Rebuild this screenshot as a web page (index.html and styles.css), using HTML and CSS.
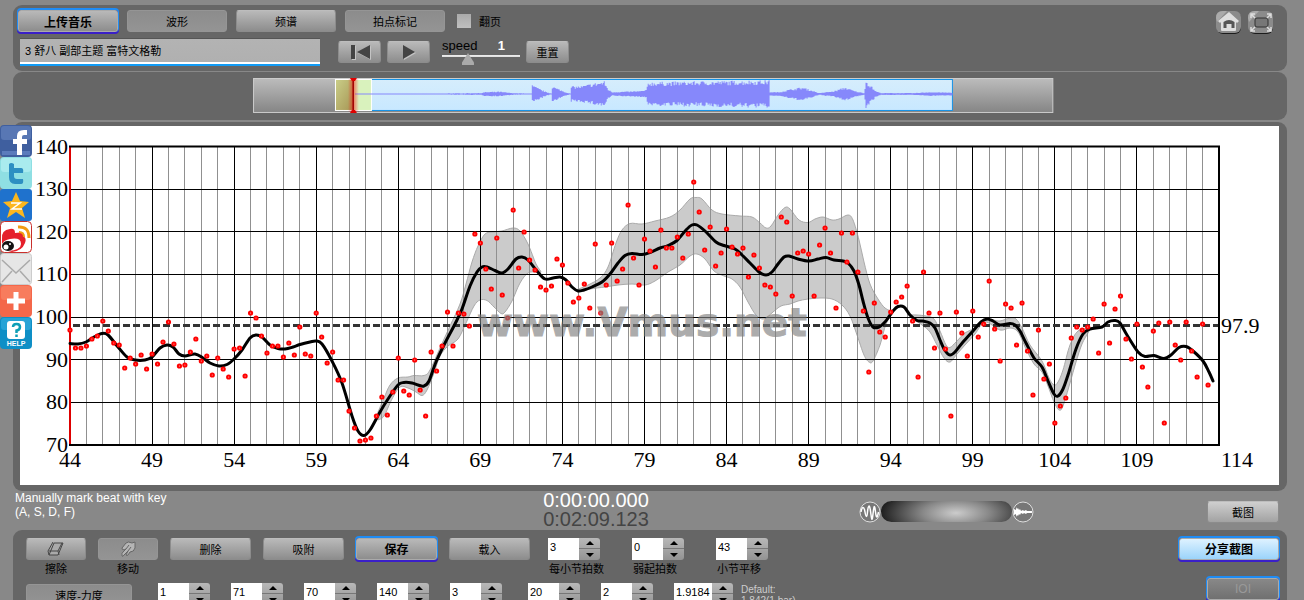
FILE: index.html
```html
<!DOCTYPE html>
<html lang="zh-CN">
<head>
<meta charset="utf-8">
<title>Vmus.net</title>
<link rel="stylesheet" href="styles.css">
</head>
<body>
<div class="app">
  <header class="panel toolbar">
    <div class="toolbar-main">
      <div class="row tabs">
        <button class="btn btn-primary btn-wide">上传音乐</button>
        <button class="btn btn-pressed btn-wide">波形</button>
        <button class="btn btn-wide">频谱</button>
        <button class="btn btn-pressed btn-wide">拍点标记</button>
        <label class="check"><input type="checkbox"><span>翻页</span></label>
      </div>
      <div class="row transport">
        <input class="filename" type="text" aria-label="文件" value="3 舒八 副部主题 富特文格勒">
        <button class="btn btn-small" aria-label="回到开头">
          <svg width="24" height="18" viewBox="0 0 24 18"><path class="glyph-light" d="M4 3h4v14H4zM23 3v14L10 10z"/><path class="glyph" d="M3 2h4v14H3zM22 2v14L9 9z"/></svg>
        </button>
        <button class="btn btn-small" aria-label="播放">
          <svg width="24" height="18" viewBox="0 0 24 18"><path class="glyph-light" d="M7 3v14l12-7z"/><path class="glyph" d="M6 2v14l12-7z"/></svg>
        </button>
        <div class="speed">
          <div class="speed-head"><label for="speed">speed</label><output for="speed">1</output></div>
          <input id="speed" type="range" min="0" max="3.3" step="0.1" value="1">
        </div>
        <button class="btn btn-small">重置</button>
      </div>
    </div>
    <nav class="window-tools">
      <button class="icon-btn" aria-label="主页">
        <svg width="27" height="25" viewBox="0 0 27 25"><rect x="2" y="2" width="24" height="22" rx="6" fill="#1c1c1c"/><rect x="1" y="1" width="25" height="22" rx="6" fill="#8b8b8b"/><path d="M1 8q0-7 7-7h4L2 12z" fill="#aaa"/><path d="M3 11L14 2l10 9-2 2-1-1v8q0 1-1 1H7q-1 0-1-1v-8l-1 1z" fill="#dedede"/><path d="M8.500 12q5.500-4 11 0v6h-3v-4h-5v4h-3z" fill="#555"/></svg>
      </button>
      <button class="icon-btn" aria-label="全屏">
        <svg width="27" height="25" viewBox="0 0 27 25"><rect x="2" y="2" width="24" height="22" rx="6" fill="#1c1c1c"/><rect x="1" y="1" width="25" height="22" rx="6" fill="#8b8b8b"/><path d="M1 8q0-7 7-7h4L2 12z" fill="#aaa"/><rect x="8" y="8" width="13" height="9" rx="2" fill="#777" stroke="#333"/><path d="M4 8V4h4M4 4l4 4M20 4h4v4M24 4l-4 4M4 17v4h4M4 21l4-4M20 21h4v-4M24 21l-4-4" fill="none" stroke="#ddd" stroke-width="1.500"/></svg>
      </button>
    </nav>
  </header>

  <section class="panel overview">
    <svg id="wave" class="wave" viewBox="254 78 802 35">
      <defs>
        <linearGradient id="barGrey" x1="0" y1="0" x2="0" y2="1"><stop offset="0" stop-color="#bcbcbc"/><stop offset="1" stop-color="#858585"/></linearGradient>
        <linearGradient id="barBlue" x1="0" y1="0" x2="0" y2="1"><stop offset="0" stop-color="#d6edfc"/><stop offset="1" stop-color="#c8e8ff"/></linearGradient>
        <linearGradient id="barOlive" x1="0" y1="0" x2="1" y2="1"><stop offset="0" stop-color="#cbd08a"/><stop offset="1" stop-color="#a69554"/></linearGradient>
        <linearGradient id="cursorGlow"><stop offset="0" stop-color="#f00" stop-opacity="0"/><stop offset=".5" stop-color="#f00" stop-opacity=".5"/><stop offset="1" stop-color="#f00" stop-opacity="0"/></linearGradient>
      </defs>
      <rect x="254.500" y="78.500" width="800" height="34" fill="url(#barGrey)" stroke="#ccc"/>
      <rect x="354" y="79.500" width="600" height="31" fill="url(#barBlue)" stroke="#1592e6"/>
      <rect x="336" y="79" width="18" height="32" fill="url(#barOlive)"/>
      <rect x="354" y="79" width="19" height="32" fill="#d9f2bd"/>
      <rect x="336.500" y="79.500" width="36" height="31" fill="none" stroke="#fff"/>
      <path id="wavePath" fill="#8688fb"/>
      <rect x="349" y="79" width="11" height="33" fill="url(#cursorGlow)"/>
      <rect x="353.500" y="79" width="1.500" height="33" fill="#a00000"/>
      <path d="M351 78h7l-2 3h-3zM351 113h7l-2-3h-3z" fill="#e00000"/>
    </svg>
  </section>

  <main class="panel chart-panel">
    <svg id="chart" class="chart" viewBox="20 126 1259 359" role="img" aria-label="速度曲线">
      <g id="bands"></g>
      <g id="grid"></g>
      <line class="mean" x1="73" y1="325.500" x2="1218" y2="325.500"/>
      <path id="curve" class="curve"/>
      <g id="dots"></g>
      <text class="watermark" x="477" y="336">www.Vmus.net</text>
      <g id="labels"></g>
    </svg>
  </main>

  <section class="status">
    <p class="hint">Manually mark beat with key<br>(A, S, D, F)</p>
    <div class="clock"><div class="now">0:00:00.000</div><div class="total">0:02:09.123</div></div>
    <div class="status-right">
      <div class="volume">
        <svg width="22" height="22" viewBox="0 0 22 22"><circle cx="11" cy="11" r="10" fill="#777" stroke="#ddd"/><path d="M2 11C3 5 5 5 6 11s2 6 2.500 0 2-9 3-1 1.500 12 2.500 3 1.500-10 2.500-2 2 5 3 0" fill="none" stroke="#fff" stroke-width="1.500"/></svg>
        <div class="volume-bar"></div>
        <svg width="22" height="22" viewBox="0 0 22 22"><circle cx="11" cy="11" r="10" fill="#777" stroke="#ddd"/><path d="M2 8l2 1V6l1 2 1-1 1 2 1-1 1 2 2-1 1 1 2-1 1 1h5v2h-5l-1 1-2-1-1 1-2-1-1 2-1-1-1 2-1-1-1 2v-3l-2 1z" fill="#fff"/></svg>
      </div>
      <button class="btn btn-shot">截图</button>
    </div>
  </section>

  <section class="panel controls">
    <div class="row control-row">
      <div class="tool"><button id="erase" class="btn btn-tool" aria-labelledby="erase-l"><svg width="18" height="16" viewBox="0 0 18 16"><path d="M2 14L7 2h9l-5 12zM2 14l-1-4L6 1" fill="#aaa" stroke="#444"/><path d="M2 10h9l1 4M11 10l4-8" fill="none" stroke="#444"/></svg></button><label id="erase-l" for="erase">擦除</label></div>
      <div class="tool"><button id="move" class="btn btn-pressed btn-tool" aria-labelledby="move-l"><svg width="18" height="16" viewBox="0 0 18 16"><path d="M3 15q-1-3 2-5l2-2q-4 2-4-1l4-5q2-2 6 0l3-1v6q-1 4-5 4l-2 3q-1 1-2 0l2-4-4 4q-1 2-2 1z" fill="#b5b5b5" stroke="#666"/><path d="M7 8l3-4M9 10l3-4" stroke="#666"/></svg></button><label id="move-l" for="move">移动</label></div>
      <button class="btn btn-mid">删除</button>
      <button class="btn btn-mid">吸附</button>
      <button class="btn btn-primary btn-mid">保存</button>
      <button class="btn btn-mid">载入</button>
      <div class="field"><span class="stepper"><input id="f1" type="text" value="3"><span class="arrows"><button aria-label="增加"></button><button aria-label="减少"></button></span></span><label for="f1">每小节拍数</label></div>
      <div class="field"><span class="stepper"><input id="f2" type="text" value="0"><span class="arrows"><button aria-label="增加"></button><button aria-label="减少"></button></span></span><label for="f2">弱起拍数</label></div>
      <div class="field"><span class="stepper"><input id="f3" type="text" value="43"><span class="arrows"><button aria-label="增加"></button><button aria-label="减少"></button></span></span><label for="f3">小节平移</label></div>
      <button class="btn btn-primary btn-share">分享截图</button>
    </div>
    <div class="row param-row">
      <button class="btn btn-pressed btn-mode">速度-力度</button>
      <div class="params">
        <span class="stepper"><input type="text" aria-label="参数一" value="1"><span class="arrows"><button aria-label="增加"></button><button aria-label="减少"></button></span></span>
        <span class="stepper"><input type="text" aria-label="参数二" value="71"><span class="arrows"><button aria-label="增加"></button><button aria-label="减少"></button></span></span>
        <span class="stepper"><input type="text" aria-label="参数三" value="70"><span class="arrows"><button aria-label="增加"></button><button aria-label="减少"></button></span></span>
        <span class="stepper"><input type="text" aria-label="参数四" value="140"><span class="arrows"><button aria-label="增加"></button><button aria-label="减少"></button></span></span>
        <span class="stepper"><input type="text" aria-label="参数五" value="3"><span class="arrows"><button aria-label="增加"></button><button aria-label="减少"></button></span></span>
      </div>
      <div class="params">
        <span class="stepper"><input type="text" aria-label="参数六" value="20"><span class="arrows"><button aria-label="增加"></button><button aria-label="减少"></button></span></span>
        <span class="stepper"><input type="text" aria-label="参数七" value="2"><span class="arrows"><button aria-label="增加"></button><button aria-label="减少"></button></span></span>
        <span class="stepper stepper-wide"><input type="text" aria-label="参数八" value="1.9184"><span class="arrows"><button aria-label="增加"></button><button aria-label="减少"></button></span></span>
      </div>
      <p class="default">Default:<br>1.842(1 bar)</p>
      <button class="btn btn-primary btn-off" disabled>IOI</button>
    </div>
  </section>

  <aside class="social">
    <a href="#" aria-label="Facebook"><svg viewBox="0 0 32 32"><rect width="32" height="32" rx="4" fill="#3f5f9f"/><rect x="1" y="1" width="30" height="14" rx="3" fill="#5877b4"/><rect x="2" y="26" width="28" height="4" fill="#5b7cbc"/><path d="M17 30V19h-4v-5h4v-3q0-6 7-6h3v5h-3q-2 0-2 2v2h5v5h-5v11z" fill="#fff"/></svg></a>
    <a href="#" aria-label="Twitter"><svg viewBox="0 0 32 32"><rect width="32" height="32" rx="4" fill="#8fdfe3"/><rect x="1" y="1" width="30" height="14" rx="3" fill="#a9ebee"/><path d="M9 7q2-2 5 0v4h7q3 0 2 5h-9v3q0 3 3 3h6q1 5-2 5h-6q-6 0-6-7z" fill="#2d8fc2"/></svg></a>
    <a href="#" aria-label="QQ空间"><svg viewBox="0 0 32 32"><rect width="32" height="32" rx="3" fill="#1f72cd"/><path d="M16 3l4 9 9 1-7 6 3 10-9-6-9 6 3-10-7-6 9-1z" fill="#fcb71f"/><path d="M11 14h9l-8 6h10" fill="none" stroke="#fff" stroke-width="1.500"/></svg></a>
    <a href="#" aria-label="微博"><svg viewBox="0 0 32 32"><rect x=".5" y=".5" width="31" height="31" rx="4" fill="#fff" stroke="#c9302c"/><path d="M2 18Q1 9 10 8q5-1 5 4 10-2 8 3 4 2 2 7-3 8-13 9l-4-1q13-1 13-7 0-7-11-5-6 1-8 5z" fill="#e5202b"/><ellipse cx="8" cy="25" rx="6" ry="5" fill="#111"/><circle cx="6" cy="26" r="2.500" fill="#fff"/><circle cx="10" cy="23" r="1" fill="#fff"/><path d="M18 6q11-1 11 11" fill="none" stroke="#f39b12" stroke-width="3"/><path d="M19 11q5 0 5 5" fill="none" stroke="#f39b12" stroke-width="2"/></svg></a>
    <a href="#" aria-label="邮件"><svg viewBox="0 0 32 32"><rect x=".5" y=".5" width="31" height="31" rx="3" fill="#e6e6e6" stroke="#ccc"/><path d="M2 7l14 13L30 7M2 29l10-11M30 29L20 18" fill="none" stroke="#aaa" stroke-width="1.500"/></svg></a>
    <a href="#" aria-label="分享"><svg viewBox="0 0 32 32"><rect width="32" height="32" rx="4" fill="#f4674a"/><rect x="1" y="1" width="30" height="14" rx="3" fill="#f87c5d"/><path d="M16 7v18M7 16h18" stroke="#fff" stroke-width="5"/></svg></a>
    <a href="#" aria-label="帮助"><svg viewBox="0 0 32 32"><rect width="32" height="32" rx="4" fill="#0e8fc6"/><rect x="1" y="1" width="30" height="12" rx="3" fill="#27a3d6"/><rect x="7" y="4" width="18" height="18" rx="3" fill="#fff"/><path d="M13 10q0-3 3.500-3t3.500 3-3.500 3.500V16M16.500 17.500v2.500" fill="none" stroke="#0e9fb6" stroke-width="2.500"/><text class="help" x="16" y="29" text-anchor="middle">HELP</text></svg></a>
  </aside>
</div>
<script src="chart.js"></script>
</body>
</html>
```

FILE: styles.css
```css
* { box-sizing: border-box; }

body {
  margin: 0;
  background: #888;
  font-family: "Liberation Sans", "Noto Sans CJK SC", sans-serif;
  font-size: 11px;
  color: #000;
}

.app {
  position: relative;
  height: 100vh;
  overflow: hidden;
  padding: 5px 17px 0 13px;
}

.panel {
  background: #666;
  border-radius: 9px;
}

.row { display: flex; }

button, input { font: inherit; color: inherit; }

.btn {
  height: 22px;
  padding: 0;
  border: 1px solid #8c8c8c;
  border-top-color: #bdbdbd;
  border-radius: 3px;
  background: linear-gradient(#b9b9b9, #8d8d8d);
  display: flex;
  align-items: center;
  justify-content: center;
  white-space: nowrap;
  flex-shrink: 0;
}

.btn-pressed {
  background: linear-gradient(#8c8c8c, #949494);
  border-color: #959595;
}

.btn-primary {
  font-size: 12px;
  font-weight: bold;
  border-color: #aaa;
  box-shadow: 0 -1px 0 1px #1f8cf5, 0 1px 0 1px #3a1fc8;
}

.btn-wide { width: 100px; }
.btn-small { width: 43px; }
.btn-tool { width: 60px; }
.btn-mid { width: 81px; }
.btn-shot { width: 72px; background: linear-gradient(#cfcfcf, #a2a2a2); }
.btn-mode { width: 106px; }
.btn-share {
  width: 100px;
  margin-left: auto;
  background: linear-gradient(#def2ff, #9bd4fb);
}
.btn-off {
  width: 72px;
  margin-left: auto;
  font-weight: normal;
  color: #999;
  background: linear-gradient(#888, #707070);
}

.glyph { fill: #444; }
.glyph-light { fill: #c4c4c4; }

/* toolbar */
.toolbar {
  display: flex;
  justify-content: space-between;
  height: 66px;
  padding: 5px 13px 4px 5px;
}
.tabs { gap: 9px; }
.check {
  display: flex;
  align-items: center;
  gap: 8px;
  margin-left: 3px;
}
.check input {
  appearance: none;
  width: 14px;
  height: 14px;
  margin: 0;
  background: linear-gradient(#aaa, #c0c0c0);
}
.transport {
  align-items: center;
  padding: 0 0 0 2px;
  margin-top: 6px;
}
.filename {
  width: 300px;
  height: 28px;
  margin-right: 18px;
  padding: 0 5px 4px;
  border: 0;
  border-top: 1px solid #555;
  border-bottom: 2px solid #129bf4;
  background: linear-gradient(#b3b3b3, #b0b0b0) top / 100% 23px no-repeat #fff;
}
.transport .btn + .btn { margin-left: 6px; }
.speed {
  width: 78px;
  margin: 0 6px 0 12px;
}
.speed-head {
  display: flex;
  justify-content: space-between;
  padding-right: 15px;
  font-size: 13px;
  line-height: 14px;
}
.speed-head output { color: #fff; font-weight: bold; }
.speed input {
  appearance: none;
  display: block;
  width: 100%;
  height: 12px;
  margin: 0;
  background: linear-gradient(#eee, #ddd) 0 2px / 100% 2px no-repeat;
}
.speed input::-webkit-slider-thumb {
  appearance: none;
  width: 12px;
  height: 12px;
  background: #aaa;
  clip-path: polygon(50% 0, 100% 80%, 100% 100%, 0 100%, 0 80%);
}
.window-tools { display: flex; gap: 5px; }
.icon-btn {
  width: 27px;
  height: 25px;
  padding: 0;
  border: 0;
  background: none;
}

/* overview */
.overview {
  display: flex;
  justify-content: center;
  margin-top: 1px;
  padding: 6px 0 7px 8px;
}
.wave { display: block; width: 63.3%; }

/* chart */
.chart-panel {
  margin-top: 2px;
  padding: 4px 8px 6px 7px;
}
.chart { display: block; width: 100%; background: #fff; }
.minor { stroke: #909090; shape-rendering: crispEdges; }
.major { stroke: #000; shape-rendering: crispEdges; }
.frame { fill: none; stroke: #000; stroke-width: 2; }
.start { stroke: #d00; stroke-width: 2; }
.band { fill: #cbcbcb; stroke: #aaa; }
.curve { fill: none; stroke: #000; stroke-width: 3; stroke-linecap: round; }
.mean { stroke: #333; stroke-width: 3; stroke-dasharray: 7 3; }
.dot { fill: #fbb; stroke: #f00; stroke-width: 2; }
.axis { font: 22px "Liberation Serif", serif; }
.watermark {
  font: bold 39px "DejaVu Sans", sans-serif;
  fill: #808080;
  stroke: #808080;
  opacity: .65;
}

/* status */
.status {
  display: grid;
  grid-template-columns: 1fr auto 1fr;
  align-items: start;
  height: 39px;
  padding: 0 8px 0 2px;
}
.hint { margin: 0; font-size: 12px; line-height: 14px; color: #fff; }
.clock { font-size: 20px; line-height: 19px; color: #fff; margin-right: 102px; }
.total { color: #444; }
.status-right {
  display: flex;
  justify-content: flex-end;
  align-items: center;
  gap: 173px;
  padding-top: 10px;
}
.volume { display: flex; align-items: center; }
.volume-bar {
  width: 131px;
  height: 21px;
  border-radius: 11px;
  background: radial-gradient(ellipse 74px 28px at 75px 12px, #ccc, #888 45%, #222);
}

/* controls */
.controls { padding: 8px 8px 20px 13px; height: 150px; }
.control-row { align-items: flex-start; height: 46px; }
.control-row > * { margin-right: 12px; }
.tool {
  display: flex;
  flex-direction: column;
  align-items: center;
  line-height: 18px;
}
.field { width: 66px; line-height: 18px; margin: 0 6px 0 6px; white-space: nowrap; }
.field + .field { margin-left: 12px; }
.field label { display: block; padding-left: 1px; }
.control-row .btn-share { margin-right: 0; margin-left: auto; }
.stepper { display: flex; width: 52px; height: 22px; }
.stepper input {
  flex: 1;
  min-width: 0;
  padding: 0 2px 4px;
  border: 0;
  background: #fff;
}
.stepper-wide { width: 59px; }
.arrows {
  display: flex;
  flex-direction: column;
  width: 21px;
  border-radius: 0 3px 3px 0;
  background: linear-gradient(#b8b8b8, #939393);
}
.arrows button {
  flex: 1;
  padding: 0;
  border: 0;
  background: none;
  display: flex;
  align-items: center;
  justify-content: center;
}
.arrows button + button { border-top: 1px solid #777; }
.arrows button::before {
  content: "";
  border: 4px solid transparent;
  border-top: 0;
  border-bottom: 4px solid #000;
}
.arrows button + button::before {
  border-bottom: 0;
  border-top: 4px solid #000;
}
.param-row { align-items: flex-start; }
.param-row .stepper { margin-top: -1px; }
.param-row .btn-off { margin-top: -6px; margin-right: 0; }
.params { display: flex; gap: 21px; margin-left: 26px; }
.default {
  margin: 0 0 0 8px;
  font-size: 10px;
  line-height: 11px;
  color: #ccc;
}

/* share links */
.social {
  position: absolute;
  left: 0;
  top: 125px;
  width: 32px;
  display: flex;
  flex-direction: column;
}
.social a, .social svg { display: block; height: 32px; }
.help { font: bold 7px "Liberation Sans", sans-serif; fill: #fff; }
```

FILE: chart.js
```js
const NS = "http://www.w3.org/2000/svg";
const add = (parent, tag, attrs, text) => {
  const el = document.createElementNS(NS, tag);
  for (const k in attrs) el.setAttribute(k, attrs[k]);
  if (text) el.textContent = text;
  document.getElementById(parent).appendChild(el);
};

const LEFT = 70, RIGHT = 1219, TOP = 146.5, BOTTOM = 445;
const barWidth = (RIGHT - LEFT) / 70;

// Smooth path through flat [x, y, x, y, ...] points
const smooth = (flat) => {
  const p = [];
  for (let i = 0; i < flat.length; i += 2) p.push([flat[i], flat[i + 1]]);
  let d = "M" + p[0];
  for (let i = 0; i < p.length - 1; i++) {
    const a = p[i - 1] || p[i], b = p[i], c = p[i + 1], e = p[i + 2] || c;
    d += `C${b[0] + (c[0] - a[0]) / 6},${b[1] + (c[1] - a[1]) / 6} ${c[0] - (e[0] - b[0]) / 6},${c[1] - (e[1] - b[1]) / 6} ${c}`;
  }
  return d;
};

const bands = [
  [378,412,384,398,390,385,398,378,408,377,414,375.5,424,375.5,430,370,440,348,450,326,460,304,466,284,472,262,478,246,485,234,493,232,502,231,513,228,520,231,528,244,536,264,541,272,536,272,528,273,520,283,512,301,505,312,501,313.5,494,307,487,300.5,480,300,474,306,466,323,458,339,448,346,440,356,434,373,427,390,422,395.5,416,392,408,388,400,387,392,399,384,416,378,420],
  [576,290,588,285,600,278,608,267,616,243,622,230,630,223.5,642,224,655,221,670,217,680,210,690,199,696,197.5,702,199,712,210,722,214,740,216,752,217,760,223,766,228,771,226,778,215,785,207.5,790,209,799,220,808,222.5,815,219,823,217,832,220,839,219,848,215,853,220,859,240,864,262,870,284,878,299,885,308,893,312,893,313,886,324,880,345,873,361,869,362,864,355,857,335,850,316,842,305,832,299,820,298,808,299,798,301,790,304,781,306,773,312,764,319,756,315,748,302,740,287,732,279,724,276,714,271,705,259,697,254,690,256,680,265,668,272,655,281,645,285,632,284,618,285,605,287,590,289,578,292],
  [910,315,917,315,926,316,934,319,940,331,946,345,950,347.5,956,342,965,333,975,328,985,320,993,320,1000,321,1010,318,1016,319,1022,328,1030,345,1042,361,1049,378,1054,385,1058,382,1063,370,1070,345,1078,331,1090,328,1088,333,1082,344,1076,362,1070,383,1063,406,1059,410,1054,402,1048,386,1042,372,1034,364,1026,349,1018,332,1010,328,1000,330,985,322,975,334,965,345,957,354,950,362,944,358,937,345,930,332,922,325,910,317]
];
bands.forEach((b) => add("bands", "path", { class: "band", d: smooth(b) + "Z" }));

for (let i = 1; i < 70; i++) {
  const x = Math.floor(LEFT + i * barWidth) + 0.5;
  add("grid", "line", { class: i % 5 ? "minor" : "major", x1: x, x2: x, y1: TOP, y2: BOTTOM });
}
for (let i = 0; i <= 7; i++) {
  const y = TOP + i * (BOTTOM - TOP) / 7;
  const line = Math.floor(y) + 0.5;
  if (i && i < 7) add("grid", "line", { class: "major", x1: LEFT, x2: RIGHT, y1: line, y2: line });
  add("labels", "text", { class: "axis", x: 68, y: Math.round(y + 7), "text-anchor": "end" }, String(140 - i * 10));
}
add("grid", "rect", { class: "frame", x: LEFT, y: TOP, width: RIGHT - LEFT, height: BOTTOM - TOP });
add("grid", "line", { class: "start", x1: LEFT, x2: LEFT, y1: TOP + 1, y2: BOTTOM - 1 });
for (let i = 0; i <= 14; i++) {
  const x = i < 14 ? LEFT + i * 5 * barWidth : RIGHT + 18;
  add("labels", "text", { class: "axis", x, y: 467, "text-anchor": "middle" }, String(44 + i * 5));
}
add("labels", "text", { class: "axis", x: 1221, y: 333 }, "97.9");

document.getElementById("curve").setAttribute("d", smooth([
  70,343.5,78,344,86,342,94,337,102,333.5,108,335,118,347,127,357,135,360,145,360,152,357,160,348,167,345,173,347,179,354,185,356,195,354,203,358,210,363,219,366,227,364.5,234,359,242,350,250,338,256,335,262,337,270,345,278,348.5,285,349,293,347,300,344.5,310,342,316,341,322,344,332,361,342,383,352,416,358,431,364,435.5,370,430,380,412,388,399,398,385,404,382.5,412,383,418,385,424,386,429,381,436,362,445,343,455,324,462,309,470,286,477,272,482,267,487,267,495,270.5,502,273,508,269,516,259,522,257,528,260,537,271,545,279,553,278,560,277,566,280,572,287,578,291,584,290,592,287,602,282,610,274,618,263,625,255.5,632,253.5,642,254.5,650,252.5,660,248,668,245.5,677,240.5,686,230,692,225,697,225,705,231,716,242,724,245.5,735,249,742,255,750,263,759,272,766,275,772,272,778,264,784,257,789,256,798,259,809,261,818,259,826,257.5,834,260,843,261,848,263,854,271,859,285,863,301,868,318,873,327,879,327,885,322,893,311,898,306.5,904,307,910,315,917,320.5,923,321,930,323,935,328,940,340,945,350.5,950,355,955,352,963,342,973,331,981,322,987,319,993,321,1000,325,1010,323.5,1015,325,1020,331,1026,343,1034,358,1042,367,1048,381,1054,394,1058,396,1063,389,1068,375,1076,349,1083,334,1090,329,1102,327,1108,322,1115,320.5,1120,323,1127,335,1138,352,1145,356.5,1154,355.5,1164,358.5,1171,355,1179,347.5,1186,346.5,1193,351,1203,361,1209,372,1213,381
]));

// One measured tempo per beat, three beats to a bar
const beats = [
  330,348,348,346,339,336,321,331,343,345,368,358,364,355,369,354,364,342,322,344,366,365,352,339,361,356,375,358,369,377,349,348,376,313,318,336,353,346,346,357,343,355,
  327,354,356,313,337,363,352,380,380,411,428,441,440,438,416,397,415,392,358,391,395,360,390,416,352,371,346,312,346,313,314,326,234,243,269,289,238,295,318,210,268,232,260,270,287,290,286,259,265,283,302,298,284,308,244,313,285,243,281,
  269,205,258,285,239,251,267,230,248,248,237,258,234,182,212,250,227,266,253,229,247,254,248,277,255,268,285,287,294,217,222,296,253,251,254,296,245,228,253,308,233,262,233,272,311,372,303,332,337,312,302,297,286,321,377,272,313,
  348,313,349,416,312,333,356,311,337,324,281,329,361,304,308,345,303,351,395,330,379,364,423,406,398,338,327,330,327,319,353,304,343,309,296,339,359,324,367,387,331,323,423,322,345,360,322,351,377,324,385
];
beats.forEach((y, i) => add("dots", "circle", { class: "dot", cx: LEFT + i * barWidth / 3, cy: y, r: 1.6 }));

// Waveform envelope: x, half height
const env = [[356,.5],[440,.6],[482,1],[485,2],[500,2.5],[512,1],[530,.5],[532,.5],[533,9],[547,2],[552,.5],[553,8],[566,2],[571,.5],[572,8],[582,8],[590,10],[605,13],[609,5],[613,2],[640,3],[647,4],[649,12],[770,14],[771,2],[780,2],[792,5],[803,7],[815,3],[820,1],[835,3],[846,7],[856,3],[865,1],[867,14],[877,3],[882,1],[915,1],[930,2],[954,1.5]];
let seed = 7, wave = "";
const rand = () => (seed = (seed * 16807) % 2147483647) / 2147483647;
for (let x = 356, k = 0; x < 954; x++) {
  while (k < env.length - 2 && env[k + 1][0] <= x) k++;
  const [x0, h0] = env[k], [x1, h1] = env[k + 1];
  const h = h0 + (h1 - h0) * (x - x0) / (x1 - x0);
  const up = Math.max(.5, h * (.65 + .35 * rand())), down = Math.max(.5, h * (.65 + .35 * rand()));
  wave += `M${x} ${94 - up}h1v${up + down}h-1z`;
}
document.getElementById("wavePath").setAttribute("d", wave);
```
